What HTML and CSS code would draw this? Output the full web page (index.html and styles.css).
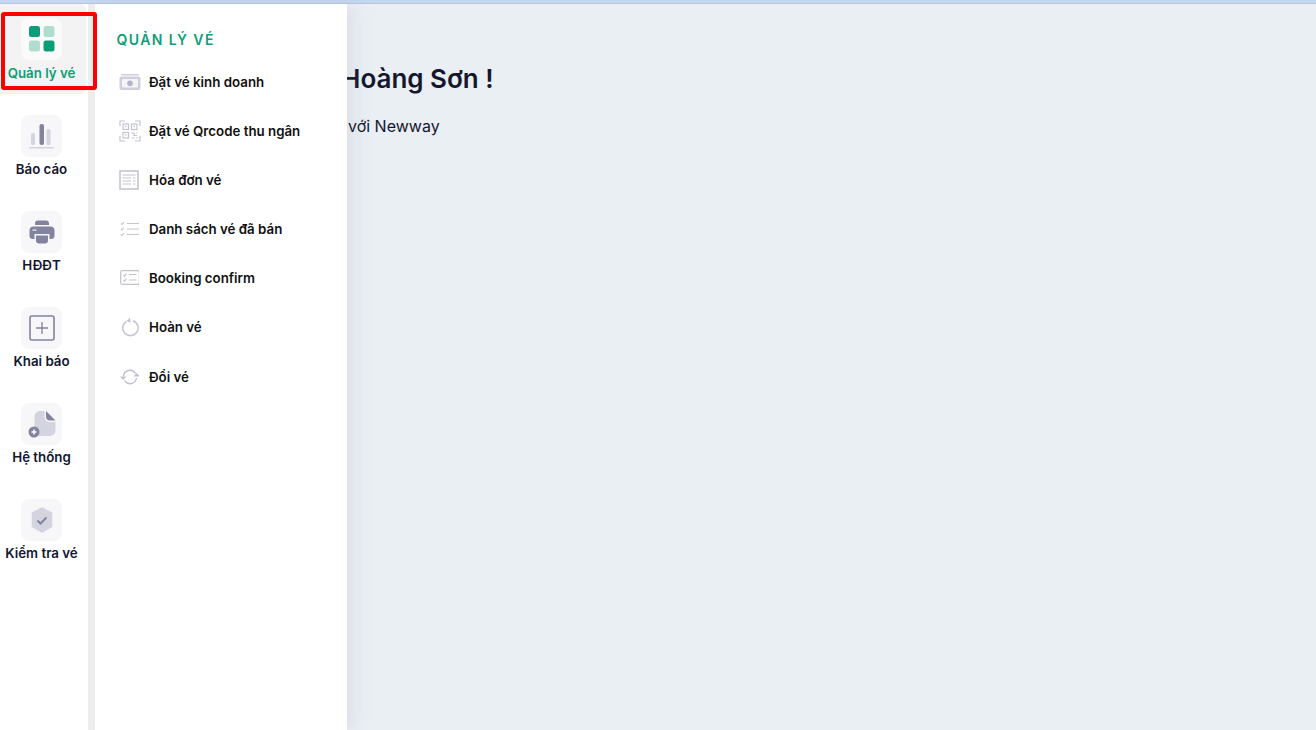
FILE: index.html
```html
<!DOCTYPE html>
<html lang="vi">
<head>
    <meta charset="UTF-8">
    <title>Newway</title>
    <link rel="stylesheet" href="styles.css">
</head>
<body>
    <div class="top-line"></div>
    <div class="layout">
        <!-- Cột menu chính -->
        <nav class="rail">
            <a class="rail-item active">
                <span class="rail-icon">
                    <svg width="26" height="26" viewBox="0 0 26 26"><rect x="0" y="0" width="11" height="11" rx="2.5" fill="#0a9d77"/><rect x="14.5" y="0" width="11" height="11" rx="2.5" fill="#b1ddd0"/><rect x="0" y="14.5" width="11" height="11" rx="2.5" fill="#b1ddd0"/><rect x="14.5" y="14.5" width="11" height="11" rx="2.5" fill="#0a9d77"/></svg>
                </span>
                <span>Quản lý vé</span>
            </a>
            <a class="rail-item">
                <span class="rail-icon">
                    <svg width="26" height="26" viewBox="0 0 26 26"><rect x="2" y="10" width="4" height="12" rx="1.5" fill="#d3d4e0"/><rect x="10.5" y="1" width="4.5" height="21" rx="2" fill="#82849f"/><rect x="17.5" y="6" width="4" height="16" rx="1.5" fill="#d3d4e0"/><rect x="0" y="24" width="25" height="1.6" rx=".8" fill="#d3d4e0"/></svg>
                </span>
                <span>Báo cáo</span>
            </a>
            <a class="rail-item">
                <span class="rail-icon">
                    <svg width="26" height="26" viewBox="0 0 26 26"><path d="M6 6V4.500C6 2.500 7 1.500 9 1.500H17C19 1.500 20 2.500 20 4.500V6Z" fill="#82849f"/><path d="M4.500 7.500H21.500C24 7.500 25.500 9 25.500 11.500V17C25.500 19 24 20 22.500 20H20.500V15H5.500V20H3.500C2 20 .5 19 .5 17V11.500C.5 9 2 7.500 4.500 7.500Z" fill="#82849f"/><path d="M7 16.500H19V21.500C19 23.500 18 24.500 16 24.500H10C8 24.500 7 23.500 7 21.500Z" fill="#82849f"/><rect x="3.500" y="10.500" width="4" height="1.200" fill="#f0f0f5"/></svg>
                </span>
                <span>HĐĐT</span>
            </a>
            <a class="rail-item">
                <span class="rail-icon">
                    <svg width="26" height="26" viewBox="0 0 26 26"><rect x="1" y="1" width="24" height="24" rx="2" fill="none" stroke="#82849f" stroke-width="1.600"/><path d="M13 7V19M7 13H19" stroke="#82849f" stroke-width="1.300" fill="none"/></svg>
                </span>
                <span>Khai báo</span>
            </a>
            <a class="rail-item">
                <span class="rail-icon">
                    <svg width="28" height="28" viewBox="0 0 28 28"><path d="M7 8C7 3 9 1 13 1H17V6C17 10 19 12 23 12H28V19C28 24 26 26 21 26H12C9 26 7 24 7 21Z" fill="#d3d4e0" transform="translate(-.500 0)"/><path d="M18 1L27.500 10.500H22C19.500 10.500 18 9 18 6.500Z" fill="#82849f"/><circle cx="6" cy="22" r="5.500" fill="#82849f"/><path d="M3.500 22H8.500M6 19.500V24.500" stroke="#fff" stroke-width="1.500"/></svg>
                </span>
                <span>Hệ thống</span>
            </a>
            <a class="rail-item">
                <span class="rail-icon">
                    <svg width="22" height="26" viewBox="0 0 22 26"><path d="M11 1L20.500 6V19.500L11 25L1.500 19.500V6Z" fill="#d3d4e0" stroke="#d3d4e0" stroke-width="1.500" stroke-linejoin="round"/><path d="M6.500 13.500L9.500 16.500L15.500 10.500" stroke="#82849f" stroke-width="2" fill="none"/></svg>
                </span>
                <span>Kiểm tra vé</span>
            </a>
        </nav>
        <div class="rail-scroll"></div>

        <!-- Menu con đang mở -->
        <aside class="submenu">
            <h2>QUẢN LÝ VÉ</h2>
            <a class="sub-item">
                <svg width="22" height="18" viewBox="0 0 22 18"><rect x="2" y="1" width="18" height="1.500" fill="#cfd0dc"/><rect x=".5" y="3.500" width="21" height="13.500" rx="2" fill="#cfd0dc"/><rect x="3" y="6" width="16" height="8.500" rx="1" fill="#f4f4f7"/><circle cx="11" cy="10.200" r="2.800" fill="#b4b5c9"/></svg>
                <span>Đặt vé kinh doanh</span>
            </a>
            <a class="sub-item">
                <svg width="22" height="22" viewBox="0 0 22 22" fill="none" stroke="#c3c4d3" stroke-width="1.200"><path d="M1 6V1H6M16 1H21V6M21 16V21H16M6 21H1V16"/><rect x="4" y="4" width="5.500" height="5.500"/><rect x="12.500" y="4" width="5.500" height="5.500"/><rect x="4" y="12.500" width="5.500" height="5.500"/><path d="M12.500 13H15V15.500H18M12.500 18H15.500M18 12.500V13.500M18 17V18.500"/><path d="M6 6.300H7.500M14.500 6.300H16M6 14.800H7.500"/></svg>
                <span>Đặt vé Qrcode thu ngân</span>
            </a>
            <a class="sub-item">
                <svg width="20" height="20" viewBox="-1 0 20 20" fill="none" stroke="#c0c1d1"><rect x="0" y="1" width="18" height="18" stroke-width="1.500"/><path d="M2.500 5H15.500M2.500 8H11M13 8H15.500M2.500 11H11M13 11H15.500M2.500 14H11M13 14H15.500" stroke-width="1.200"/></svg>
                <span>Hóa đơn vé</span>
            </a>
            <a class="sub-item">
                <svg width="20" height="16" viewBox="-1 0 20 16" fill="none" stroke="#c3c4d3" stroke-width="1.100"><path d="M7 2.500H19.500M7 8H19.500M7 13.500H19.500"/><path d="M1 2.500L2 3.500L4 1M1 8L2 9L4 6.500M1 13.500L2 14.500L4 12"/></svg>
                <span>Danh sách vé đã bán</span>
            </a>
            <a class="sub-item">
                <svg width="20" height="15" viewBox="-1 0 20 15" fill="none" stroke="#c0c1d1" stroke-width="1.200"><rect x=".7" y=".7" width="18.600" height="13.600" rx="1.500"/><path d="M3.500 5L4.500 6L6.500 3.500M3.500 10L4.500 11L6.500 8.500M9 4.500H16.500M9 10H16.500"/></svg>
                <span>Booking confirm</span>
            </a>
            <a class="sub-item">
                <svg width="20" height="20" viewBox="-2 0 20 20" fill="none" stroke="#c3c4d3" stroke-width="1.500"><path d="M5.500 4.300A7.700 7.700 0 1 0 12 3.700"/><path d="M9 .8L5.500 3.800L9.500 6" fill="#c3c4d3" stroke="none"/></svg>
                <span>Hoàn vé</span>
            </a>
            <a class="sub-item sub-item-last">
                <svg width="20" height="16" viewBox="-1 0 20 16" fill="none" stroke="#bfc0d0" stroke-width="1.400"><path d="M3.500 7A6.500 6.500 0 0 1 15.500 4.500M16.500 9A6.500 6.500 0 0 1 4.500 11.500"/><path d="M0 6.500H6.500L3.200 10Z" fill="#bfc0d0" stroke="none" transform="translate(0 1)"/><path d="M13.500 8.500H20L16.700 5Z" fill="#bfc0d0" stroke="none" transform="translate(0 -1)"/></svg>
                <span>Đổi vé</span>
            </a>
        </aside>

        <!-- Nội dung trang, phần đầu bị menu con che -->
        <main class="content">
            <h1>Hoàng Sơn !</h1>
            <p>với Newway</p>
        </main>

        <!-- Khung đỏ đánh dấu -->
        <div class="marker"></div>
    </div>
</body>
</html>
```

FILE: styles.css
```css
/* Kiểu chung */
html, body {
    height: 100%;
}

body {
    margin: 0;
    padding: 0;
    font-family: 'Inter', 'Liberation Sans', sans-serif;
    background-color: #eaeff4;
    color: #14172e;
    overflow: hidden;
    display: flex;
    flex-direction: column;
}

.top-line {
    height: 3px;
    background-color: #c5d6f1;
    border-bottom: 1px solid #b5c6e6;
    flex-shrink: 0;
}

.layout {
    position: relative;
    display: flex;
    flex: 1;
    min-height: 0;
}

/* Cột menu chính */
.rail {
    width: 83px;
    background-color: #fff;
    flex-shrink: 0;
    display: flex;
    flex-direction: column;
    gap: 6px;
    padding-right: 5px;
}

.rail-item {
    height: 90px;
    box-sizing: border-box;
    padding-top: 15px;
    display: flex;
    flex-direction: column;
    align-items: center;
    gap: 4px;
    font-size: 13.3px;
    line-height: 16px;
    font-weight: 600;
    white-space: nowrap;
}

.rail-item.active {
    background-color: #f3f3f3;
    border-radius: 0 6px 6px 0;
    color: #0e9f78;
    margin-right: -3px;
    padding-right: 3px;
    padding-top: 14px;
    gap: 5px;
}

.rail-icon {
    width: 41px;
    height: 42px;
    background-color: #f7f7f9;
    border-radius: 8px;
    display: flex;
    align-items: center;
    justify-content: center;
}

.rail-item.active .rail-icon {
    background-color: #fafafa;
}

.rail-scroll {
    width: 7px;
    background-color: #eeeeee;
    flex-shrink: 0;
}

/* Menu con */
.submenu {
    width: 252px;
    flex-shrink: 0;
    position: relative;
    z-index: 1;
    background-color: #fff;
    box-shadow: 8px 0 16px rgba(120, 135, 160, 0.12);
}

.submenu h2 {
    margin: 27px 0 8px 21.500px;
    font-size: 14px;
    line-height: 18px;
    font-weight: 600;
    letter-spacing: 1.4px;
    color: #0e9f78;
}

.sub-item {
    height: 49px;
    padding-left: 24px;
    display: flex;
    align-items: center;
    font-size: 13.3px;
    font-weight: 600;
    color: #111;
    white-space: nowrap;
    position: relative;
}

.sub-item svg {
    position: absolute;
    left: 24px;
}

.sub-item span {
    margin-left: 30px;
}

.sub-item-last {
    margin-top: 1px;
}

/* Nội dung trang */
.content {
    flex: 1;
    overflow: hidden;
    padding-top: 57px;
}

.content h1 {
    margin: 0 0 0 -6px;
    font-size: 26px;
    line-height: 36px;
    font-weight: 600;
}

.content p {
    margin: 19px 0 0 1px;
    font-size: 16px;
    line-height: 20px;
}

/* Khung đỏ */
.marker {
    position: absolute;
    z-index: 2;
    left: 1px;
    top: 8px;
    width: 88px;
    height: 70px;
    border: 4px solid #ff0000;
    border-radius: 3px;
}
```
